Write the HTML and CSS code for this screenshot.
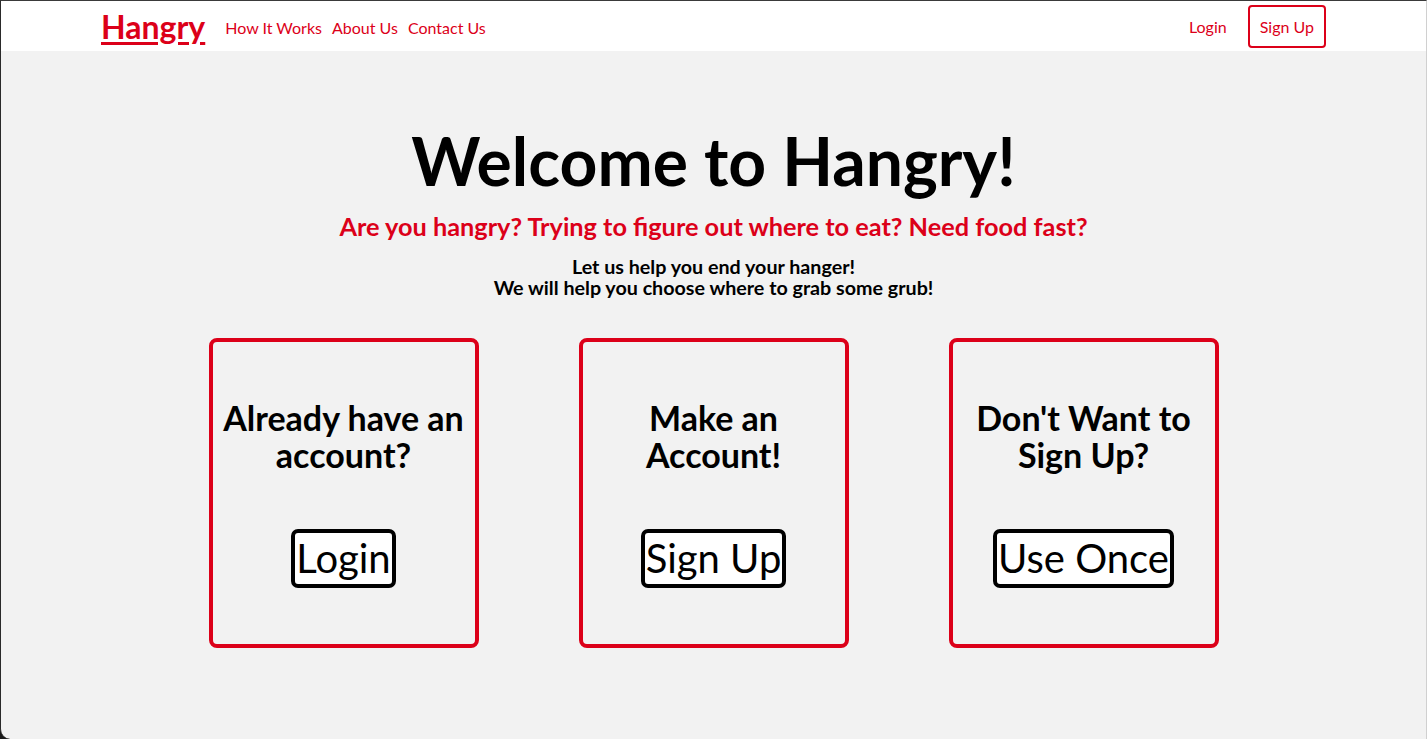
FILE: index.html
```html
<!DOCTYPE html>
<html lang="en">
<head>
<meta charset="utf-8">
<title>Hangry</title>
<link rel="stylesheet" href="styles.css">
</head>
<body>
<div class="window">
  <header class="navbar">
    <div class="nav-left">
      <a class="brand" href="#">Hangry</a>
      <nav class="nav-links">
        <a href="#">How It Works</a>
        <a href="#">About Us</a>
        <a href="#">Contact Us</a>
      </nav>
    </div>
    <div class="nav-right">
      <a class="nav-login" href="#">Login</a>
      <a class="nav-signup" href="#">Sign Up</a>
    </div>
  </header>
  <main class="main">
    <h1 class="title">Welcome to Hangry!</h1>
    <p class="subtitle">Are you hangry? Trying to figure out where to eat? Need food fast?</p>
    <p class="intro">Let us help you end your hanger!<br>We will help you choose where to grab some grub!</p>
    <section class="cards">
      <div class="card">
        <h2 class="card-title">Already have an account?</h2>
        <a class="card-btn" href="#">Login</a>
      </div>
      <div class="card">
        <h2 class="card-title">Make an<br>Account!</h2>
        <a class="card-btn" href="#">Sign Up</a>
      </div>
      <div class="card">
        <h2 class="card-title">Don't Want to<br>Sign Up?</h2>
        <a class="card-btn" href="#">Use Once</a>
      </div>
    </section>
  </main>
</div>
</body>
</html>
```
FILE: styles.css
```css
html, body {
  margin: 0;
  padding: 0;
  height: 100%;
  background: #1a1a1a;
}
body {
  font-family: Lato, "Open Sans", sans-serif;
}
.window {
  height: 739px;
  box-sizing: border-box;
  border-top: 1px solid #3a3a3a;
  border-left: 1px solid #2a2a2a;
  border-right: 1px solid #d0d0d0;
  border-bottom-left-radius: 10px;
  background: #f2f2f2;
  overflow: hidden;
  display: flex;
  flex-direction: column;
}
.navbar {
  height: 50px;
  flex-shrink: 0;
  background: #ffffff;
  display: flex;
  align-items: center;
  justify-content: space-between;
  padding: 0 100px 0 100px;
}
.nav-left {
  display: flex;
  align-items: center;
  gap: 20px;
}
.brand {
  color: #dc0019;
  font-weight: 700;
  font-size: 32px;
  text-decoration: underline;
  text-decoration-thickness: 3px;
  text-underline-offset: 3px;
}
.nav-links {
  display: flex;
  gap: 10px;
  padding-top: 2px;
}
.nav-links a {
  color: #dc0019;
  font-size: 16px;
  text-decoration: none;
}
.nav-right {
  display: flex;
  align-items: center;
  gap: 21px;
}
.nav-login {
  color: #dc0019;
  font-size: 16px;
  text-decoration: none;
}
.nav-signup {
  color: #dc0019;
  font-size: 16px;
  text-decoration: none;
  border: 2px solid #dc0019;
  border-radius: 4px;
  padding: 10px 10px;
}
.main {
  flex: 1;
  display: flex;
  flex-direction: column;
  align-items: center;
}
.title {
  margin: 70px 0 0 0;
  font-size: 66px;
  font-weight: 700;
  line-height: 80px;
  color: #000;
}
.subtitle {
  margin: 10px 0 0 0;
  color: #dc0019;
  font-size: 25.3px;
  font-weight: 700;
  line-height: 30px;
}
.intro {
  margin: 15px 0 0 0;
  text-align: center;
  font-size: 19.7px;
  font-weight: 700;
  line-height: 21px;
  color: #000;
}
.cards {
  margin-top: 40px;
  display: flex;
  gap: 100px;
}
.card {
  width: 270px;
  height: 310px;
  box-sizing: border-box;
  border: 4px solid #dc0019;
  border-radius: 8px;
  display: flex;
  flex-direction: column;
  align-items: center;
  padding-top: 57px;
}
.card-title {
  margin: 0;
  font-size: 34px;
  font-weight: 700;
  line-height: 37px;
  text-align: center;
  color: #000;
  padding: 0 6px;
}
.card-btn {
  margin-top: 56px;
  display: block;
  background: #fff;
  border: 4px solid #000;
  border-radius: 7px;
  color: #000;
  text-decoration: none;
  font-size: 40px;
  line-height: 51px;
  padding: 0 1px;
}
```
